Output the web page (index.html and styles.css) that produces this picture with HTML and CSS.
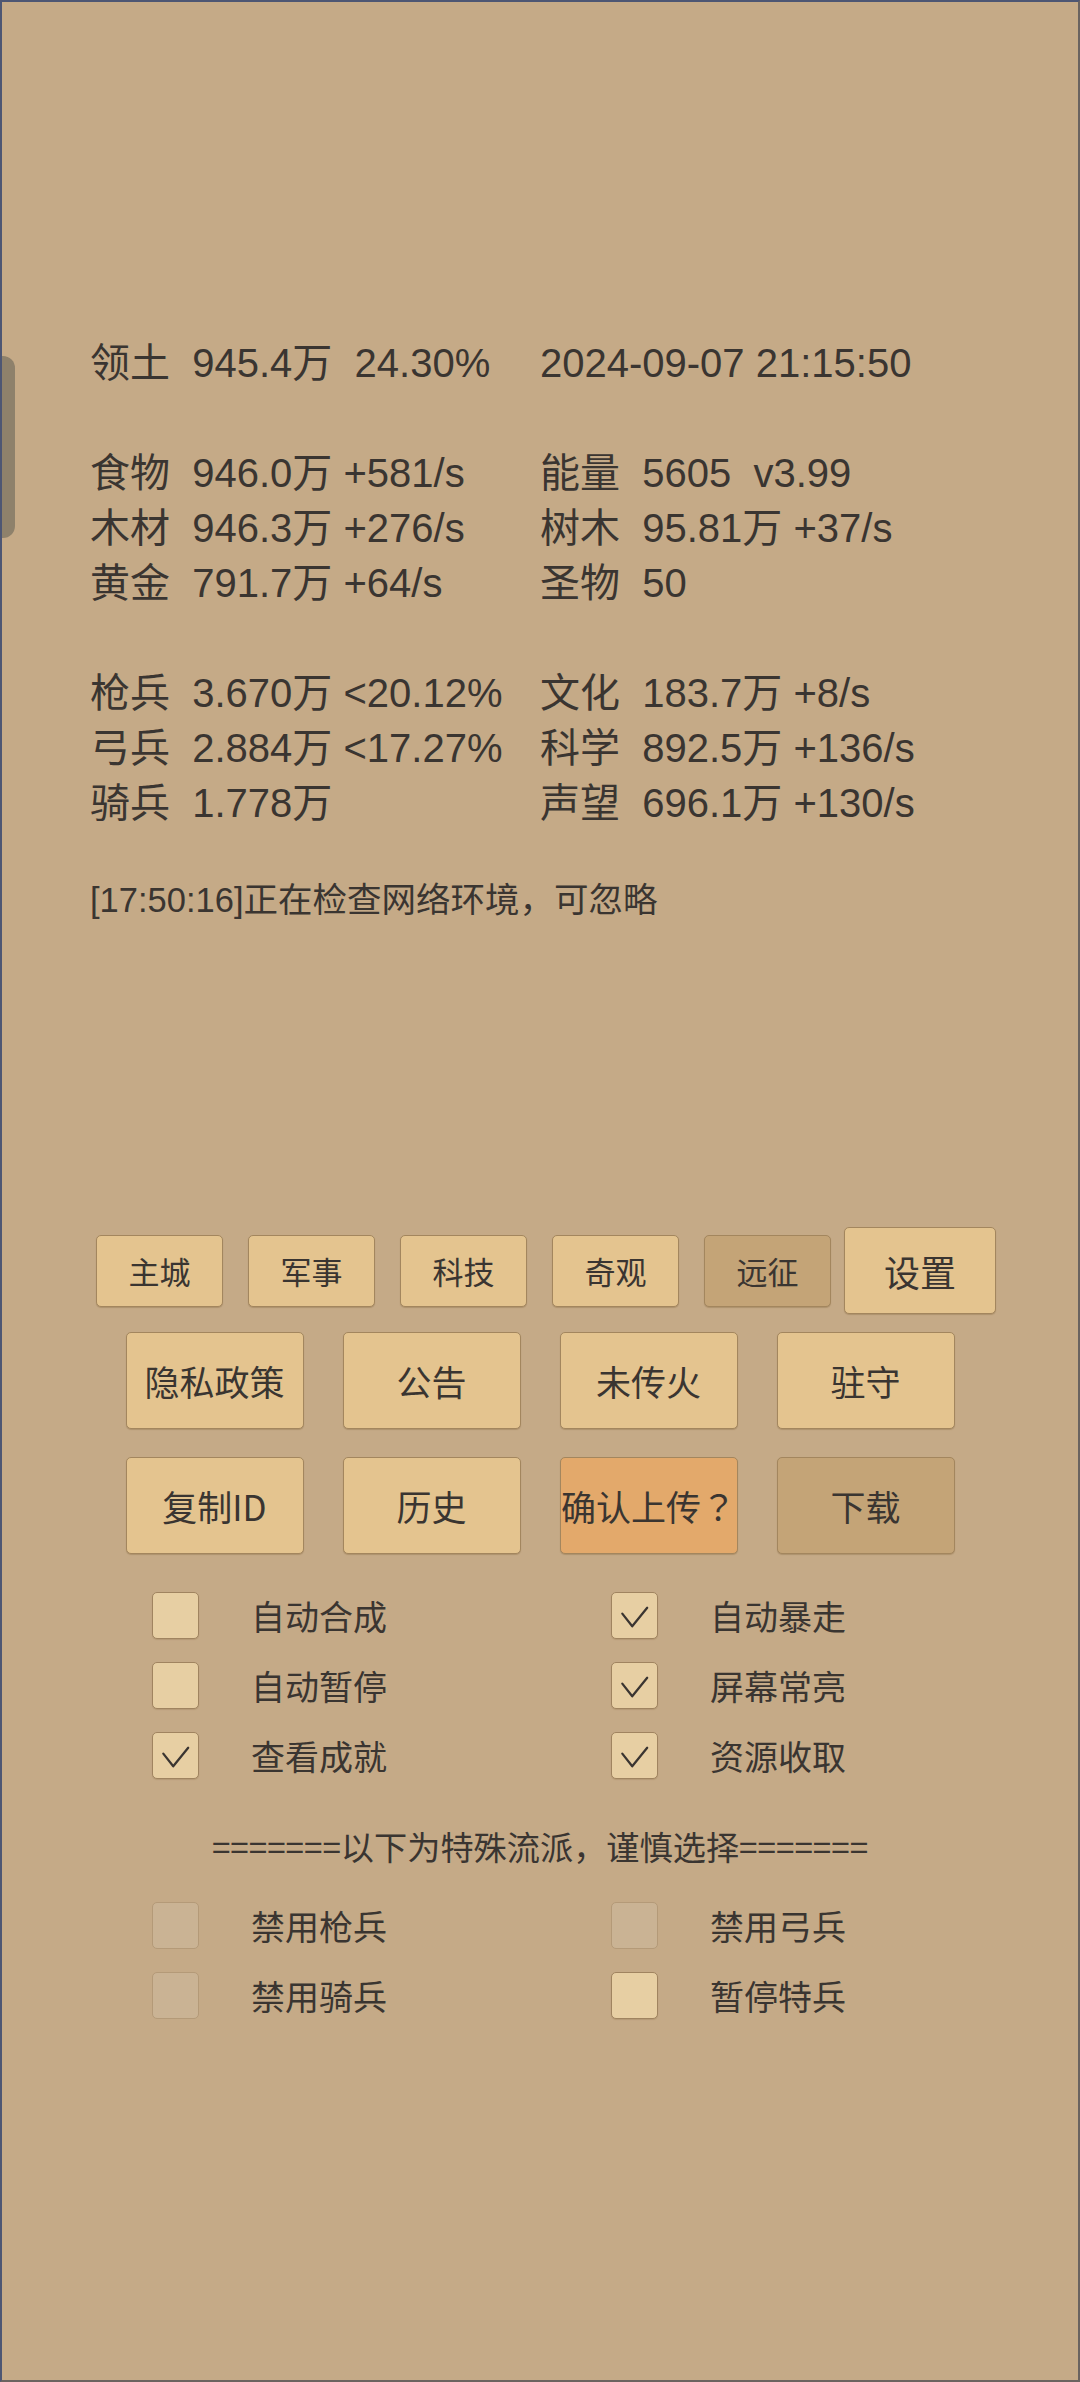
FILE: index.html
```html
<!DOCTYPE html>
<html lang="zh-CN">
<head>
<meta charset="utf-8">
<title>状态</title>
<link rel="stylesheet" href="styles.css">
</head>
<body>
<div class="screen">
  <div class="side-tab"></div>

  <section class="stats">
    <div class="col">
      <div class="line">领土  945.4万  24.30%</div>
      <div class="line"></div>
      <div class="line">食物  946.0万 +581/s</div>
      <div class="line">木材  946.3万 +276/s</div>
      <div class="line">黄金  791.7万 +64/s</div>
      <div class="line"></div>
      <div class="line">枪兵  3.670万 &lt;20.12%</div>
      <div class="line">弓兵  2.884万 &lt;17.27%</div>
      <div class="line">骑兵  1.778万</div>
    </div>
    <div class="col">
      <div class="line">2024-09-07 21:15:50</div>
      <div class="line"></div>
      <div class="line">能量  5605  v3.99</div>
      <div class="line">树木  95.81万 +37/s</div>
      <div class="line">圣物  50</div>
      <div class="line"></div>
      <div class="line">文化  183.7万 +8/s</div>
      <div class="line">科学  892.5万 +136/s</div>
      <div class="line">声望  696.1万 +130/s</div>
    </div>
  </section>

  <p class="log">[17:50:16]正在检查网络环境，可忽略</p>

  <nav class="tabs">
    <button class="btn tab">主城</button>
    <button class="btn tab">军事</button>
    <button class="btn tab">科技</button>
    <button class="btn tab">奇观</button>
    <button class="btn tab active">远征</button>
    <button class="btn settings">设置</button>
  </nav>

  <div class="actions first">
    <button class="btn action">隐私政策</button>
    <button class="btn action">公告</button>
    <button class="btn action">未传火</button>
    <button class="btn action">驻守</button>
  </div>
  <div class="actions second">
    <button class="btn action">复制ID</button>
    <button class="btn action">历史</button>
    <button class="btn action confirm">确认上传<span class="punct">？</span></button>
    <button class="btn action muted">下载</button>
  </div>

  <div class="toggles upper">
    <div class="toggle"><span class="box"></span><span class="label">自动合成</span></div>
    <div class="toggle"><span class="box"><svg class="tick" viewBox="0 0 47 47"><polyline points="11,21 21.6,34.5 37.6,14.7"/></svg></span><span class="label">自动暴走</span></div>
    <div class="toggle"><span class="box"></span><span class="label">自动暂停</span></div>
    <div class="toggle"><span class="box"><svg class="tick" viewBox="0 0 47 47"><polyline points="11,21 21.6,34.5 37.6,14.7"/></svg></span><span class="label">屏幕常亮</span></div>
    <div class="toggle"><span class="box"><svg class="tick" viewBox="0 0 47 47"><polyline points="11,21 21.6,34.5 37.6,14.7"/></svg></span><span class="label">查看成就</span></div>
    <div class="toggle"><span class="box"><svg class="tick" viewBox="0 0 47 47"><polyline points="11,21 21.6,34.5 37.6,14.7"/></svg></span><span class="label">资源收取</span></div>
  </div>

  <p class="divider">=======以下为特殊流派，谨慎选择=======</p>

  <div class="toggles lower">
    <div class="toggle"><span class="box disabled"></span><span class="label">禁用枪兵</span></div>
    <div class="toggle"><span class="box disabled"></span><span class="label">禁用弓兵</span></div>
    <div class="toggle"><span class="box disabled"></span><span class="label">禁用骑兵</span></div>
    <div class="toggle"><span class="box"></span><span class="label">暂停特兵</span></div>
  </div>
</div>
</body>
</html>
```

FILE: styles.css
```css
* { box-sizing: border-box; }

html, body {
  margin: 0;
  padding: 0;
  background: #c5aa87;
}

.screen {
  position: relative;
  width: 1080px;
  height: 2382px;
  border: 2px solid #4d5673;
  border-right-color: #6a6360;
  border-bottom-color: #6a6360;
  background: #c5aa87;
  overflow: hidden;
  font-family: "Liberation Sans", "Noto Sans CJK SC", sans-serif;
  color: #3a3531;
}

.side-tab {
  position: absolute;
  left: -2px;
  top: 354px;
  width: 15px;
  height: 182px;
  background: #8e816b;
  border-radius: 0 12px 12px 0;
}

.stats {
  display: grid;
  grid-template-columns: 450px auto;
  padding: 334px 0 0 88px;
  font-size: 40px;
  line-height: 55px;
}

.line {
  height: 55px;
  white-space: pre;
}

.log {
  margin: 46px 0 0 88px;
  font-size: 34.5px;
  line-height: 46px;
  white-space: pre;
}

.btn {
  display: flex;
  align-items: center;
  justify-content: center;
  margin: 0;
  padding: 0;
  border: 1.5px solid #a3865e;
  border-radius: 5px;
  background: #e4c48f;
  color: #3a3531;
  font-family: "Noto Sans CJK SC", "Liberation Sans", sans-serif;
  white-space: nowrap;
  box-shadow: 0 1px 1px rgba(120, 90, 50, 0.3);
}

.tabs {
  display: flex;
  align-items: center;
  gap: 25px;
  height: 87px;
  margin-top: 304px;
  padding-left: 94px;
}

.tab {
  width: 127px;
  height: 72px;
  font-size: 31px;
}

.tab.active {
  background: #c4a477;
}

.settings {
  width: 152px;
  height: 87px;
  margin-left: -12px;
  font-size: 36px;
}

.actions {
  display: flex;
  justify-content: center;
  gap: 39px;
}

.actions.first { margin-top: 18px; }
.actions.second { margin-top: 28px; }

.action {
  width: 178px;
  height: 97px;
  font-size: 35px;
}

.action.confirm {
  background: #e3a96b;
}

.punct {
  font-family: "Noto Sans CJK JP", "Noto Sans CJK SC", sans-serif;
}

.action.muted {
  background: #c4a477;
}

.toggles {
  display: grid;
  grid-template-columns: 459px auto;
  row-gap: 23px;
  padding-left: 150px;
}

.toggles.upper { margin-top: 38px; }
.toggles.lower { margin-top: 33px; }

.toggle {
  display: flex;
  align-items: center;
  gap: 52px;
  height: 47px;
}

.box {
  display: block;
  width: 47px;
  height: 47px;
  border: 1.5px solid #a08460;
  border-radius: 5px;
  background: #e7cfa3;
  box-shadow: 0 1px 1px rgba(120, 90, 50, 0.2);
}

.box.disabled {
  background: #cab394;
  border-color: #b49a78;
  box-shadow: none;
}

.tick {
  display: block;
  width: 44px;
  height: 44px;
  margin: 1px 0 0 0;
  fill: none;
  stroke: #3a3531;
  stroke-width: 2.4;
  stroke-linecap: round;
  stroke-linejoin: round;
}

.label {
  font-family: "Noto Sans CJK SC", sans-serif;
  font-size: 34px;
  line-height: 47px;
}

.divider {
  margin: 44px 0 0 0;
  text-align: center;
  font-family: "Noto Sans CJK SC", sans-serif;
  font-size: 33.2px;
  line-height: 46px;
  white-space: pre;
}
```
